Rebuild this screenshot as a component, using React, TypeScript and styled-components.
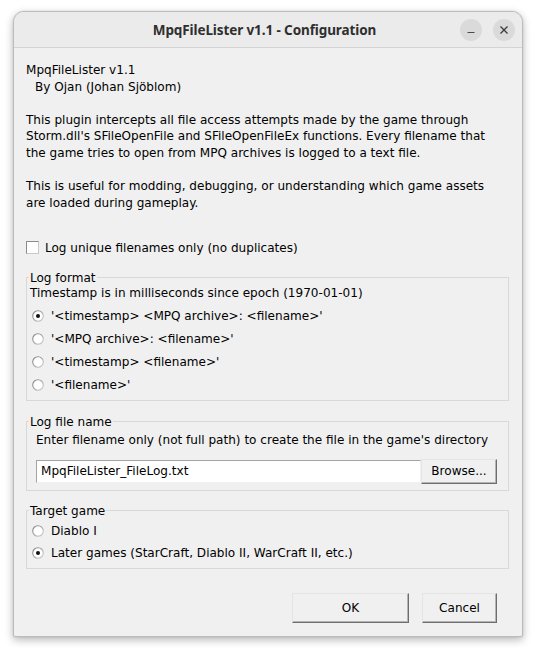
import React from 'react';
import styled, { createGlobalStyle } from 'styled-components';

const Global = createGlobalStyle`
  html, body { margin: 0; padding: 0; background: #ffffff; }
  body { font-family: "DejaVu Sans", Verdana, sans-serif; }
`;

const Page = styled.div`
  padding: 11px 0 14px 13px;
`;

const Window = styled.div`
  width: 510px;
  box-sizing: border-box;
  border: 1px solid #bcbcbc;
  border-radius: 11px 11px 2px 2px;
  overflow: hidden;
  background: #f0f0f0;
  box-shadow: 0 3px 9px rgba(0, 0, 0, 0.28), 0 0 2px rgba(0, 0, 0, 0.12);
`;

const TitleBar = styled.div`
  height: 35px;
  border-bottom: 1px solid #d4d4d4;
  background: #ebebeb;
  display: grid;
  grid-template-columns: 1fr auto 1fr;
  align-items: center;
  padding: 0 7px 0 0;
`;

const Title = styled.div`
  grid-column: 2;
  font-family: "Noto Sans", "Open Sans", sans-serif;
  font-weight: 700;
  font-size: 13.5px;
  color: #2f2f2f;
  letter-spacing: -0.1px;
`;

const TitleButtons = styled.div`
  grid-column: 3;
  justify-self: end;
  display: flex;
  gap: 11px;
`;

const RoundButton = styled.div`
  width: 22px;
  height: 22px;
  border-radius: 50%;
  background: #dadada;
  display: flex;
  align-items: center;
  justify-content: center;
`;

const Body = styled.div`
  padding: 14px 13px 13px 12px;
  display: flex;
  flex-direction: column;
  font-size: 12.05px;
  color: #000;
`;

const Intro = styled.div`
  white-space: pre;
  line-height: 16.6px;
`;

const Indent = styled.span`
  padding-left: 9px;
`;

const CheckRow = styled.label`
  margin-top: 28.6px;
  height: 16px;
  display: flex;
  align-items: center;
  gap: 6px;
  line-height: 16px;
`;

const CheckBox = styled.span`
  width: 13px;
  height: 13px;
  box-sizing: border-box;
  background: #fff;
  border: 1px solid;
  border-color: #8c8c8c #c9c9c9 #c9c9c9 #8c8c8c;
`;

const Group = styled.fieldset<{ $top: number; $bottom: number }>`
  margin: ${(p) => p.$top}px 0 0 0;
  padding: 0 3px ${(p) => p.$bottom}px 3px;
  min-width: 0;
  border: 1px solid #d8d8d8;
  display: flex;
  flex-direction: column;
`;

const Legend = styled.legend`
  padding: 0 1px;
  margin-left: -1px;
  line-height: 16px;
  font-size: 12.05px;
`;

const Line = styled.div<{ $top?: number; $indent?: number }>`
  line-height: 16px;
  margin-top: ${(p) => p.$top ?? 0}px;
  padding-left: ${(p) => p.$indent ?? 0}px;
`;

const Options = styled.div<{ $top: number }>`
  margin-top: ${(p) => p.$top}px;
  display: flex;
  flex-direction: column;
`;

const RadioRow = styled.label<{ $h: number }>`
  height: ${(p) => p.$h}px;
  display: flex;
  align-items: center;
  gap: 7px;
  padding-left: 2px;
`;

const EditRow = styled.div`
  margin: 11px 8px 0 6px;
  display: flex;
  align-items: center;
  height: 25px;
`;

const Edit = styled.div`
  flex: 1;
  height: 23px;
  box-sizing: border-box;
  background: #fff;
  border-top: 1px solid #a3a3a3;
  border-left: 1px solid #a3a3a3;
  border-right: 1px solid #f0f0f0;
  border-bottom: 1px solid #f0f0f0;
  padding-left: 4px;
  display: flex;
  align-items: center;
`;

const Button = styled.div<{ $w: number; $h: number }>`
  width: ${(p) => p.$w}px;
  height: ${(p) => p.$h}px;
  box-sizing: border-box;
  background: #f0f0f0;
  border: 1px solid;
  border-color: #e4e4e4 #6e6e6e #6e6e6e #e4e4e4;
  box-shadow: inset -1px -1px 0 #b4b4b4;
  display: flex;
  align-items: center;
  justify-content: center;
  font-size: 12.05px;
`;

const ButtonRow = styled.div`
  margin: 24px 12px 0 0;
  display: flex;
  justify-content: flex-end;
  gap: 13px;
`;

const Radio: React.FC<{ checked?: boolean }> = ({ checked }) => (
  <svg width="12" height="12" viewBox="0 0 12 12">
    <defs>
      <linearGradient id="rg" x1="0" y1="0" x2="1" y2="1">
        <stop offset="0" stopColor="#7d7d7d" />
        <stop offset="1" stopColor="#d4d4d4" />
      </linearGradient>
    </defs>
    <circle cx="6" cy="6" r="5.3" fill="#fff" stroke="url(#rg)" strokeWidth="1.1" />
    {checked && <circle cx="6" cy="6" r="2" fill="#111" />}
  </svg>
);

const introText = `MpqFileLister v1.1
`;
const introRest = `

This plugin intercepts all file access attempts made by the game through
Storm.dll's SFileOpenFile and SFileOpenFileEx functions. Every filename that
the game tries to open from MPQ archives is logged to a text file.

This is useful for modding, debugging, or understanding which game assets
are loaded during gameplay.`;

export default function App() {
  return (
    <>
      <Global />
      <Page>
        <Window>
          <TitleBar>
            <Title>MpqFileLister v1.1 - Configuration</Title>
            <TitleButtons>
              <RoundButton>
                <svg width="10" height="10" viewBox="0 0 10 10">
                  <path d="M1.5 7.5 H8.5" stroke="#4a4a4a" strokeWidth="1.2" />
                </svg>
              </RoundButton>
              <RoundButton>
                <svg width="10" height="10" viewBox="0 0 10 10">
                  <path d="M1.5 1.5 L8.5 8.5 M8.5 1.5 L1.5 8.5" stroke="#3a3a3a" strokeWidth="1.3" />
                </svg>
              </RoundButton>
            </TitleButtons>
          </TitleBar>
          <Body>
            <Intro>
              {introText}
              <Indent>By Ojan (Johan Sjöblom)</Indent>
              {introRest}
            </Intro>
            <CheckRow>
              <CheckBox />
              Log unique filenames only (no duplicates)
            </CheckRow>
            <Group $top={14} $bottom={3}>
              <Legend>Log format</Legend>
              <Line $top={-1}>Timestamp is in milliseconds since epoch (1970-01-01)</Line>
              <Options $top={4}>
                <RadioRow $h={23}>
                  <Radio checked />
                  '&lt;timestamp&gt; &lt;MPQ archive&gt;: &lt;filename&gt;'
                </RadioRow>
                <RadioRow $h={23}>
                  <Radio />
                  '&lt;MPQ archive&gt;: &lt;filename&gt;'
                </RadioRow>
                <RadioRow $h={23}>
                  <Radio />
                  '&lt;timestamp&gt; &lt;filename&gt;'
                </RadioRow>
                <RadioRow $h={23}>
                  <Radio />
                  '&lt;filename&gt;'
                </RadioRow>
              </Options>
            </Group>
            <Group $top={13} $bottom={6}>
              <Legend>Log file name</Legend>
              <Line $top={2} $indent={6}>
                Enter filename only (not full path) to create the file in the game's directory
              </Line>
              <EditRow>
                <Edit>MpqFileLister_FileLog.txt</Edit>
                <Button $w={76} $h={25}>Browse...</Button>
              </EditRow>
            </Group>
            <Group $top={12} $bottom={4}>
              <Legend>Target game</Legend>
              <Options $top={1}>
                <RadioRow $h={22}>
                  <Radio />
                  Diablo I
                </RadioRow>
                <RadioRow $h={22}>
                  <Radio checked />
                  Later games (StarCraft, Diablo II, WarCraft II, etc.)
                </RadioRow>
              </Options>
            </Group>
            <ButtonRow>
              <Button $w={117} $h={30}>OK</Button>
              <Button $w={75} $h={30}>Cancel</Button>
            </ButtonRow>
          </Body>
        </Window>
      </Page>
    </>
  );
}
